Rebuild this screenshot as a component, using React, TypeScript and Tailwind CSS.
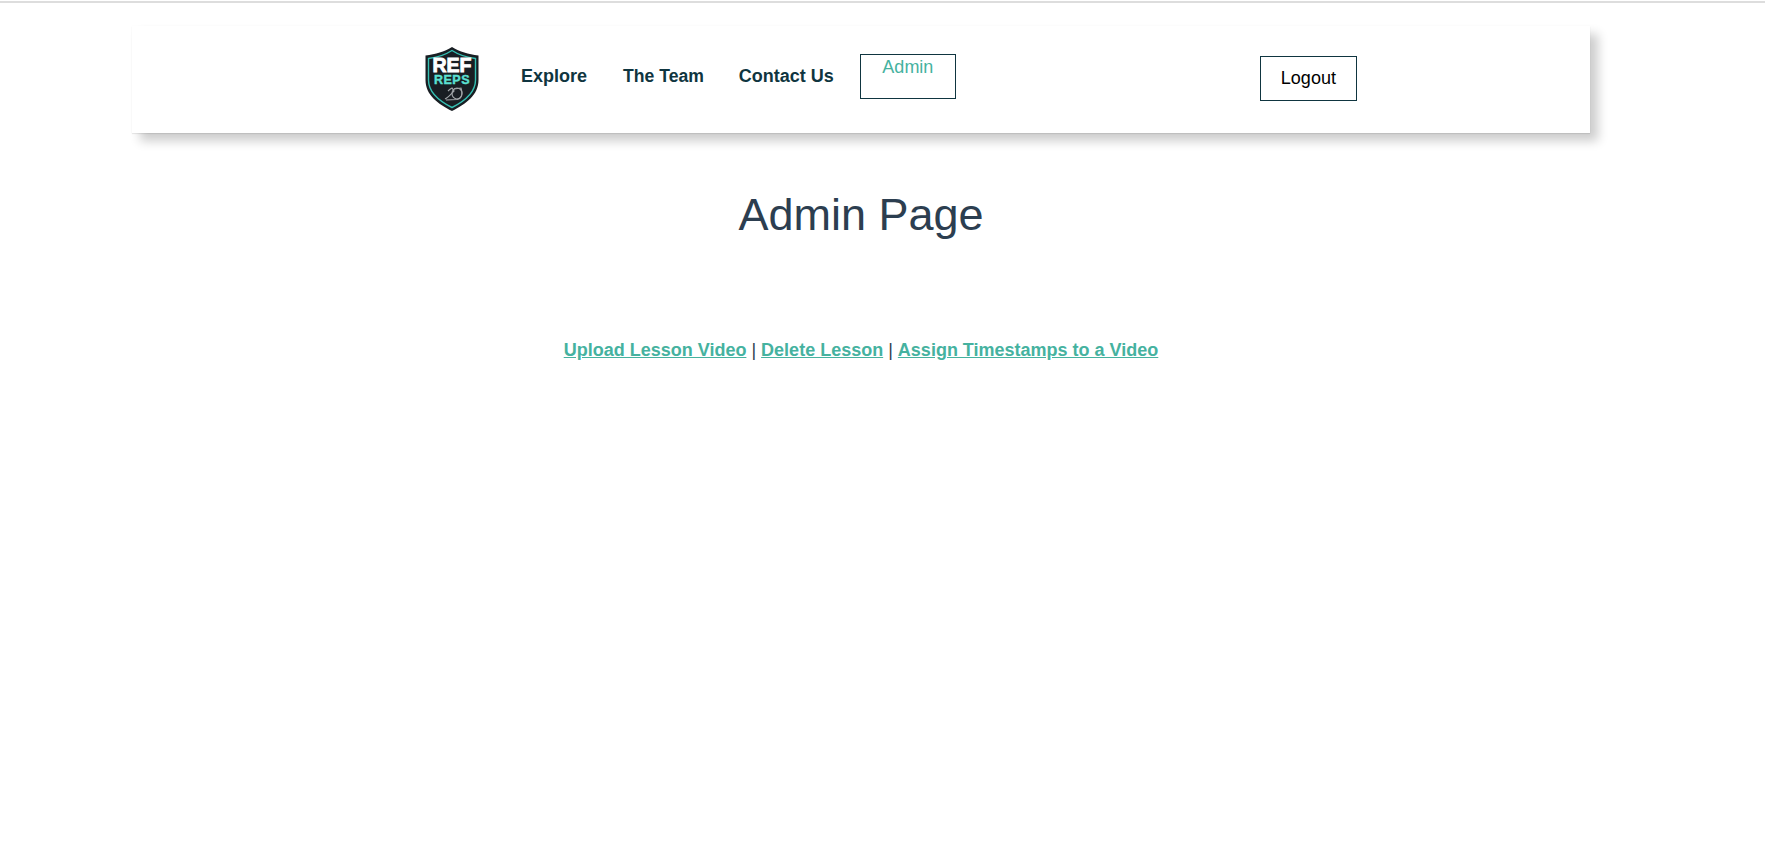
const NAV_LINKS = [
  { label: "Explore", className: "ml-[41px] text-[18px]" },
  { label: "The Team", className: "ml-[36px] text-[17.6px]" },
  { label: "Contact Us", className: "ml-[35px] text-[18px]" },
];

function Logo() {
  return (
    <svg width="56" height="66" viewBox="0 0 56 66" className="-mt-[2px] ml-px shrink-0">
      {/* Shield */}
      <path
        d="M28 1 C36 6 44 8 54.5 9.5 L54.5 34 C54.5 49 42 58 28 65 C14 58 1.5 49 1.5 34 L1.5 9.5 C12 8 20 6 28 1 Z"
        fill="#191e23"
      />
      <path
        d="M28 4.5 C35 9 43 11.5 51.5 12.5 L51.5 34 C51.5 47 40 55.5 28 61.5 C16 55.5 4.5 47 4.5 34 L4.5 12.5 C13 11.5 21 9 28 4.5 Z"
        fill="none"
        stroke="#35bfb2"
        strokeWidth="1.4"
      />
      <text
        x="28"
        y="26"
        textAnchor="middle"
        fill="#ffffff"
        stroke="#ffffff"
        strokeWidth="0.9"
        fontSize="19.5"
        fontWeight="700"
        fontFamily="'Liberation Sans', Arial, sans-serif"
      >
        REF
      </text>
      <text
        x="28"
        y="38"
        textAnchor="middle"
        fill="#5be0d2"
        stroke="#5be0d2"
        strokeWidth="0.4"
        fontSize="12.5"
        fontWeight="700"
        letterSpacing="0.5"
        fontFamily="'Liberation Sans', Arial, sans-serif"
      >
        REPS
      </text>
      {/* Whistle sketch */}
      <g fill="none" stroke="#a3a7aa" strokeWidth="1.1">
        <path d="M21 53 C25 51 28 47 30 45 L28 42 C26 43 25 44 24 45" />
        <ellipse cx="33" cy="47.5" rx="5" ry="5.5" />
        <path d="M22 54 L33 53.5 C36 53 38 50 38 46 L37 42 L30 43" />
      </g>
    </svg>
  );
}

function BoxLink({ label, className }: { label: string; className: string }) {
  return (
    <a className={`block border border-[#0f3540] text-center text-[18px] ${className}`}>
      {label}
    </a>
  );
}

export default function App() {
  return (
    <div className="min-h-[847px] bg-white font-['Liberation_Sans',Arial,sans-serif]">
      <div className="mt-px h-[2px] bg-[#dddddd]" />
      <div className="w-[1722px]">
        <nav className="mx-auto mt-[23px] flex h-[107px] w-[1458px] items-center pl-[291px] shadow-[8px_8px_10px_rgba(0,0,0,0.2),0_1px_1px_rgba(0,0,0,0.08),0_0_2px_rgba(0,0,0,0.02)]">
          <Logo />
          {NAV_LINKS.map((link) => (
            <a
              key={link.label}
              className={`-mt-[6px] font-bold text-[#0f3540] ${link.className}`}
            >
              {link.label}
            </a>
          ))}
          <BoxLink
            label="Admin"
            className="ml-[26px] -mt-[7px] h-[45px] w-[96px] leading-[24px] text-[#45b29f]"
          />
          <BoxLink
            label="Logout"
            className="ml-[304px] -mt-[3px] h-[45px] w-[97px] leading-[42px] text-black"
          />
        </nav>
        <h1 className="mt-[56px] text-center text-[45px] font-normal leading-[52px] text-[#2c3e50]">
          Admin Page
        </h1>
        <p className="mt-[96px] text-center text-[18px] text-[#2c3e50]">
          <a className="font-bold text-[#45b29f] underline">Upload Lesson Video</a> |{" "}
          <a className="font-bold text-[#45b29f] underline">Delete Lesson</a> |{" "}
          <a className="font-bold text-[#45b29f] underline">Assign Timestamps to a Video</a>
        </p>
      </div>
    </div>
  );
}
